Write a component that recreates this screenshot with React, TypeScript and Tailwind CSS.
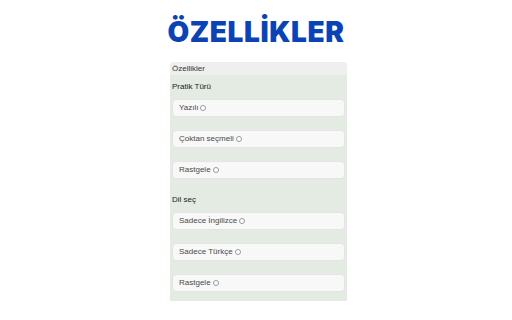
const groups = [
  { title: "Pratik Türü", options: ["Yazılı", "Çoktan seçmeli", "Rastgele"] },
  { title: "Dil seç", options: ["Sadece İngilizce", "Sadece Türkçe", "Rastgele"] },
];

function Option({ label }: { label: string }) {
  return (
    <label className="flex h-[18px] items-center rounded-[4px] border border-[#e4e4e4] bg-[#f8f8f8] pl-[6px] text-[8px] text-[#4a4a4a]">
      {label}
      <span className="ml-[2px] inline-block h-[6px] w-[6px] rounded-full border border-[#9a9a9a] bg-white" />
    </label>
  );
}

export default function App() {
  return (
    <div className="flex h-[320px] w-[512px] flex-col items-center bg-white font-['Liberation_Sans',Arial,sans-serif]">
      <h1 className="mt-[14px] font-['Inter',sans-serif] text-[28px] font-black leading-[36px] tracking-[0.6px] text-[#0b43b4]">
        ÖZELLİKLER
      </h1>
      <div className="ml-[5px] mt-[12px] w-[177px]">
        <div className="flex h-[13px] items-center rounded-t-[4px] bg-[#efefef] px-[2px] text-[8px] text-[#333]">
          Özellikler
        </div>
        <div className="flex h-[226px] flex-col bg-[#e3ebe3] px-[2px]">
          {groups.map((g) => (
            <div key={g.title}>
              <div className="flex h-[24px] items-center text-[8px] text-[#222]">{g.title}</div>
              <div className="flex flex-col gap-[13px]">
                {g.options.map((o, i) => (
                  <Option key={i} label={o} />
                ))}
              </div>
              <div className="h-[9px]" />
            </div>
          ))}
        </div>
      </div>
    </div>
  );
}
